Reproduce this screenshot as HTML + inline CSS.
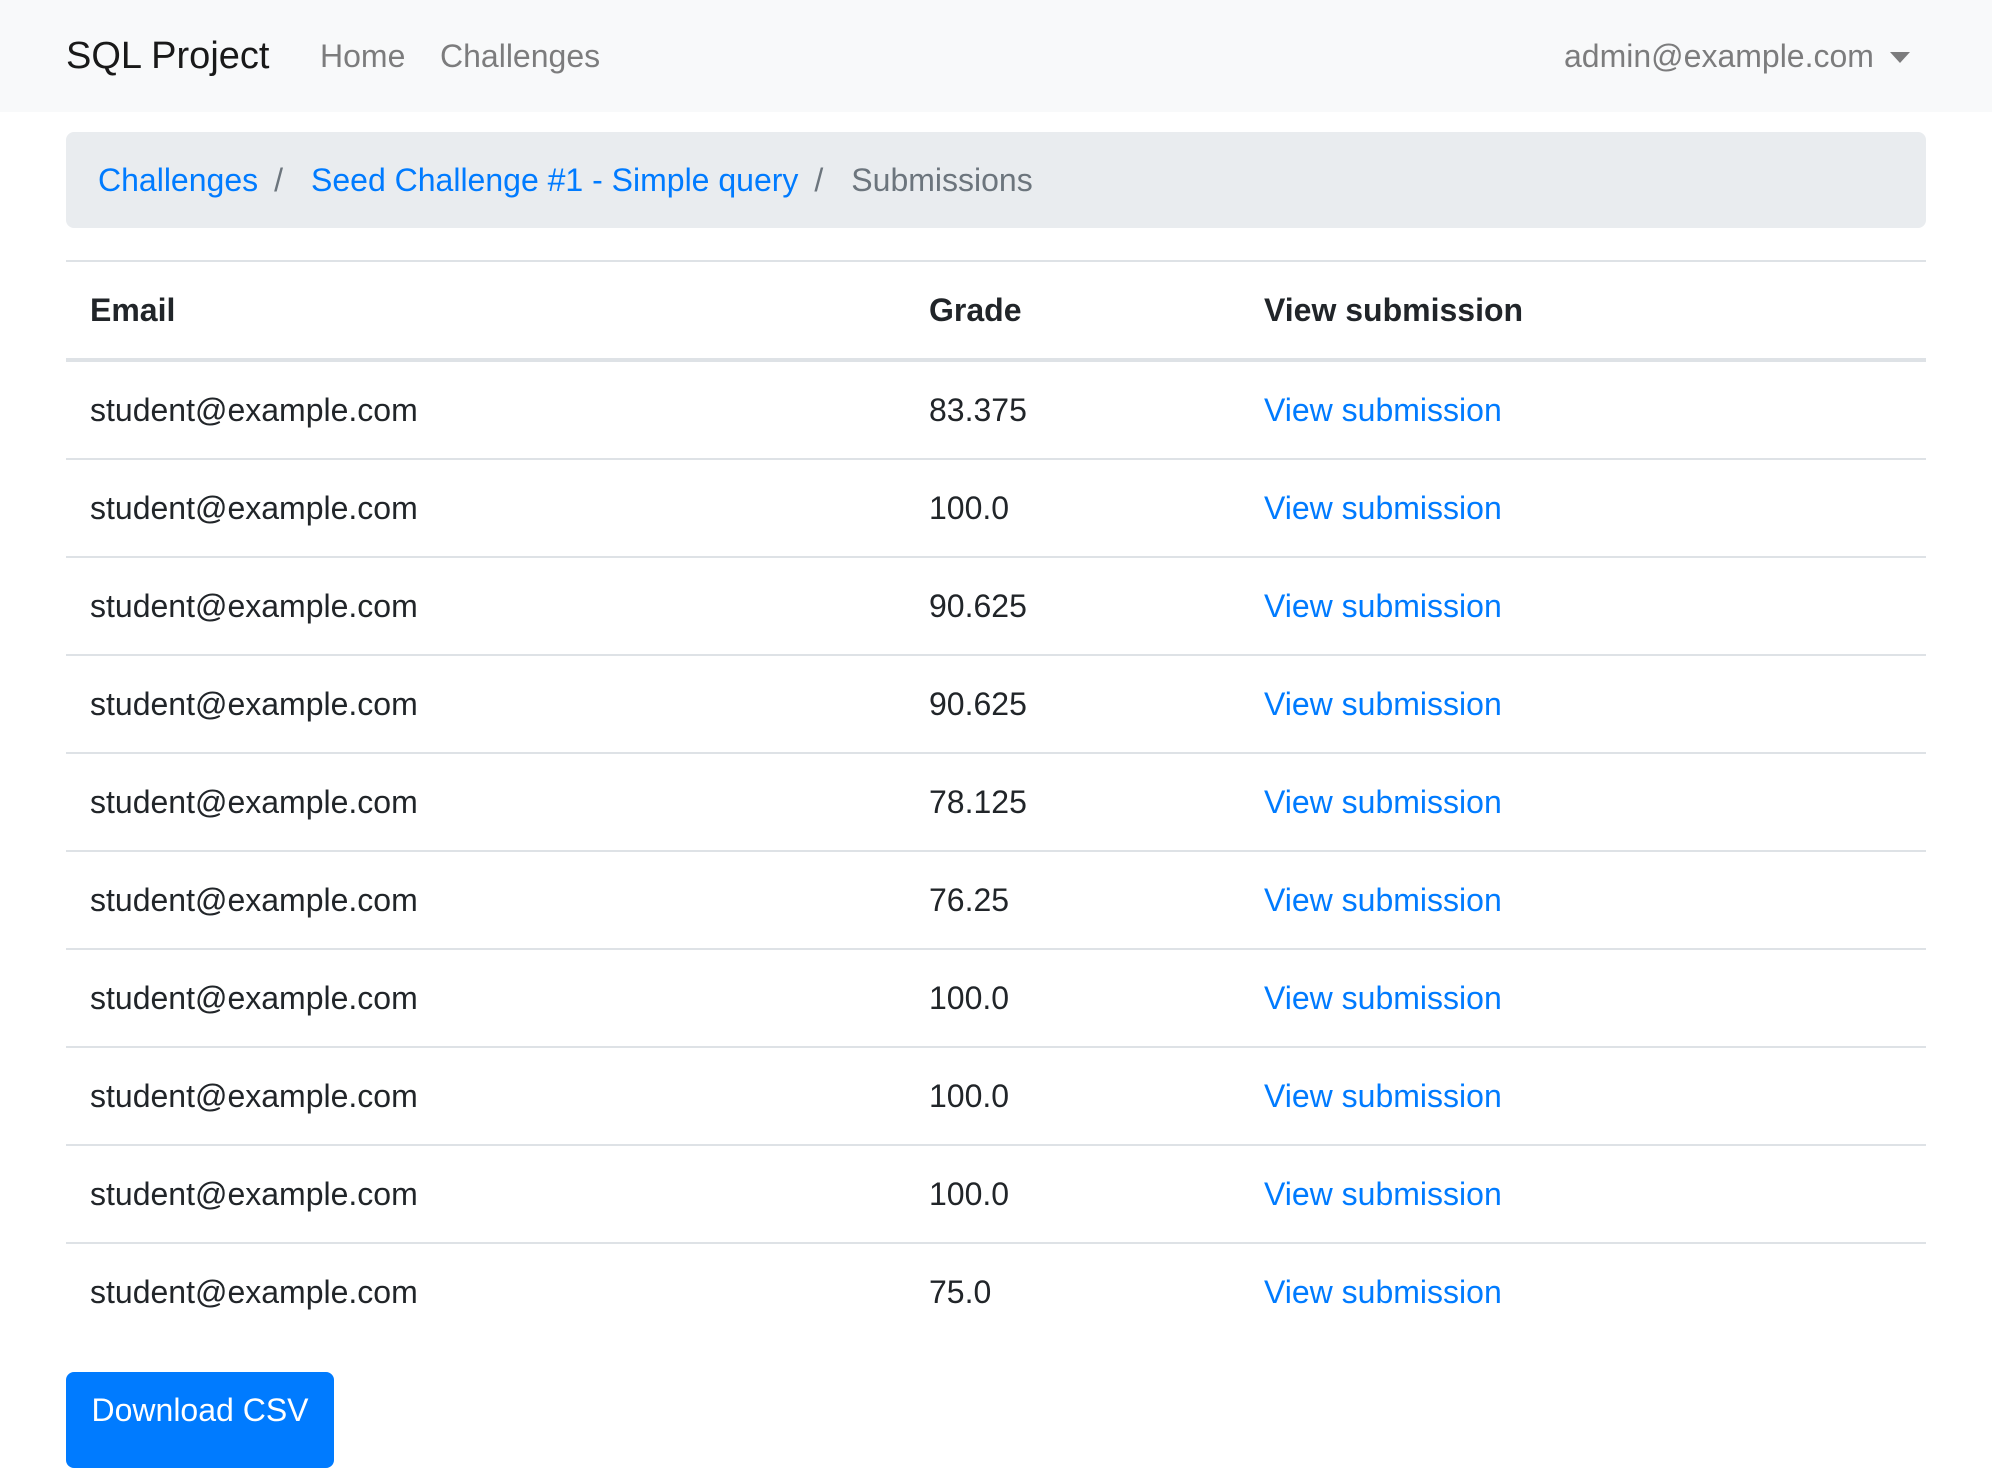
<!DOCTYPE html>
<html><head><meta charset="utf-8"><style>
*{box-sizing:border-box;margin:0;padding:0}
html,body{width:1992px;height:1448px;overflow:hidden;background:#fff}
body{font-family:"Liberation Sans",Arial,sans-serif;font-size:32px;line-height:48px;color:#212529}
.nav{height:112px;background:#f8f9fa;position:relative}
.brand{position:absolute;left:66px;top:26px;font-size:38px;line-height:60px;color:rgba(0,0,0,.9)}
.nl{position:absolute;top:32px;color:rgba(0,0,0,.5)}
.caret{position:absolute;left:1890px;top:52px;width:0;height:0;border-left:10px solid transparent;border-right:10px solid transparent;border-top:11px solid rgba(0,0,0,.5)}
.bc{position:absolute;left:66px;top:132px;width:1860px;height:96px;background:#e9ecef;border-radius:8px;padding:24px 32px}
a{color:#007bff;text-decoration:none}
.sep{color:#6c757d;padding:0 28px 0 16px}
table{position:absolute;left:66px;top:260px;width:1860px;border-collapse:collapse}
td,th{padding:24px;border-top:2px solid #dee2e6;text-align:left;vertical-align:top}
th{border-bottom:4px solid #dee2e6;font-weight:bold}
td{height:98px}
.c1{width:839px}.c2{width:335px}
.btn{position:absolute;left:66px;top:1372px;width:268px;height:96px;background:#007bff;color:#fff;border-radius:8px;padding:14px 0;text-align:center}
</style></head><body>
<div class="nav">
<div class="brand">SQL Project</div>
<div class="nl" style="left:320px">Home</div>
<div class="nl" style="left:440px">Challenges</div>
<div class="nl" style="left:1564px">admin@example.com</div>
<div class="caret"></div>
</div>
<div class="bc"><a>Challenges</a><span class="sep">/</span><a>Seed Challenge #1 - Simple query</a><span class="sep">/</span><span style="color:#6c757d">Submissions</span></div>
<table>
<tr><th class="c1">Email</th><th class="c2">Grade</th><th>View submission</th></tr>
<tr><td>student@example.com</td><td>83.375</td><td><a>View submission</a></td></tr>
<tr><td>student@example.com</td><td>100.0</td><td><a>View submission</a></td></tr>
<tr><td>student@example.com</td><td>90.625</td><td><a>View submission</a></td></tr>
<tr><td>student@example.com</td><td>90.625</td><td><a>View submission</a></td></tr>
<tr><td>student@example.com</td><td>78.125</td><td><a>View submission</a></td></tr>
<tr><td>student@example.com</td><td>76.25</td><td><a>View submission</a></td></tr>
<tr><td>student@example.com</td><td>100.0</td><td><a>View submission</a></td></tr>
<tr><td>student@example.com</td><td>100.0</td><td><a>View submission</a></td></tr>
<tr><td>student@example.com</td><td>100.0</td><td><a>View submission</a></td></tr>
<tr><td>student@example.com</td><td>75.0</td><td><a>View submission</a></td></tr>
</table>
<div class="btn">Download CSV</div>
</body></html>
